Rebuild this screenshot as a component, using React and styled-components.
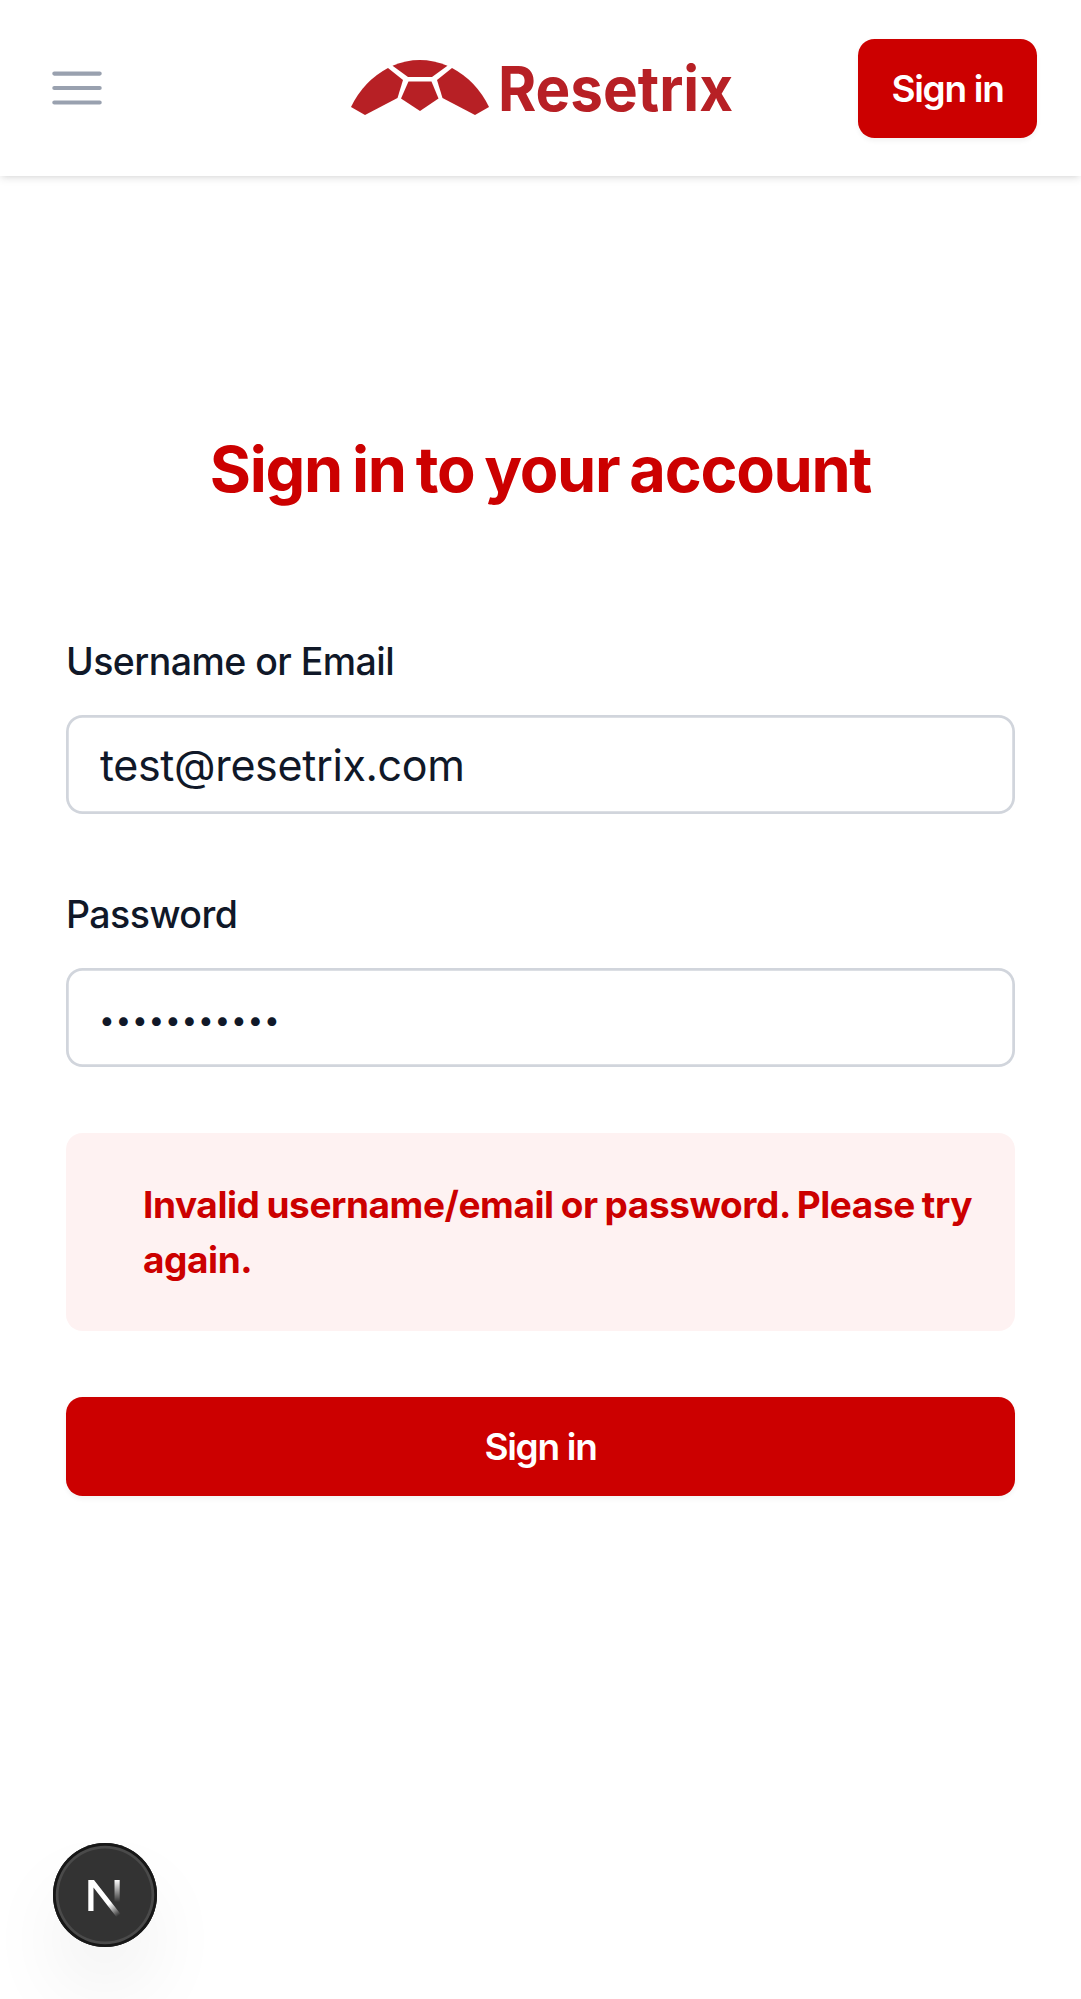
import React from "react";
import styled, { createGlobalStyle, css } from "styled-components";

const GlobalStyle = createGlobalStyle`
  *, *::before, *::after { box-sizing: border-box; }
  body {
    margin: 0;
    background: #fff;
    color: #101828;
    font-family: Inter, "Liberation Sans", sans-serif;
  }
`;

const Page = styled.div`
  display: flex;
  flex-direction: column;
  height: 1999px;
  overflow: hidden;
`;

const Header = styled.header`
  display: grid;
  grid-template-columns: 1fr auto 1fr;
  align-items: center;
  height: 176px;
  padding: 0 44px;
  background: #fff;
  box-shadow: 0 2.75px 8.25px rgba(0, 0, 0, 0.1), 0 2.75px 5.5px -2.75px rgba(0, 0, 0, 0.1);
`;

const MenuButton = styled.button`
  display: flex;
  width: 66px;
  padding: 0;
  border: 0;
  background: none;
  color: #99a1af;
`;

const Logo = styled.svg`
  display: block;
  width: 400px;
  height: 100px;
  overflow: visible;
`;

const buttonBase = css`
  display: flex;
  align-items: center;
  justify-content: center;
  height: 99px;
  border: 0;
  border-radius: 16.5px;
  background: #cc0000;
  color: #fff;
  font-family: inherit;
  font-size: 37px;
  font-weight: 600;
  letter-spacing: -1.3px;
  line-height: 55px;
  padding: 0;
  box-shadow: 0 2.75px 5.5px rgba(0, 0, 0, 0.05);
`;

const HeaderAction = styled.button`
  ${buttonBase}
  justify-self: end;
  width: 179px;
`;

const Main = styled.main`
  flex: 1;
  padding: 249px 66px 0;
`;

const Title = styled.h1`
  margin: 0;
  height: 88px;
  color: #cc0000;
  text-align: center;
  font-size: 63px;
  font-weight: 700;
  line-height: 88px;
  letter-spacing: -1.3px;
  word-spacing: -3.6px;
  white-space: nowrap;
`;

const Form = styled.form`
  display: flex;
  flex-direction: column;
  gap: 66px;
  margin-top: 114px;
`;

const Field = styled.label`
  display: flex;
  flex-direction: column;
  gap: 22px;
`;

const Label = styled.span`
  height: 66px;
  font-size: 37.5px;
  font-weight: 500;
  line-height: 69px;
  letter-spacing: -0.55px;
`;

const Input = styled.input`
  height: 99px;
  padding: 0 34px;
  border: 0;
  border-radius: 16.5px;
  outline: 0;
  background: #fff;
  box-shadow: inset 0 0 0 2.75px #d1d5dc;
  color: #101828;
  font-family: inherit;
  font-size: 43px;
  letter-spacing: -0.35px;

  &[type="password"] {
    padding: 4px 33px 0;
    font-size: 28px;
    letter-spacing: 0.75px;
  }
`;

const Alert = styled.div`
  height: 198px;
  padding: 44px 20px 0 77px;
  border-radius: 16.5px;
  background: #fef2f2;
  color: #cc0000;
  font-size: 37px;
  font-weight: 650;
  line-height: 55px;
  letter-spacing: -0.43px;
  word-spacing: -1.3px;
`;

const SubmitButton = styled.button`
  ${buttonBase}
  width: 100%;
`;

const DevBadge = styled.div`
  position: fixed;
  left: 52.5px;
  bottom: 52.5px;
  width: 104px;
  height: 104px;
  border-radius: 50%;
  background: #333;
  box-shadow: 0 0 0 2.75px #171717 inset, 0 0 0 5.5px #4a4a4a inset,
    0 44px 88px -16px rgba(0, 0, 0, 0.12);
`;

const MenuIcon = () => (
  <svg width="66" height="66" viewBox="0 0 24 24" fill="none" stroke="currentColor" strokeWidth="1.5" strokeLinecap="round">
    <path d="M3.75 6.75h16.5M3.75 12h16.5M3.75 17.25h16.5" />
  </svg>
);

const BrandLogo = () => (
  <Logo viewBox="340.5 38 400 100" role="img" aria-label="Resetrix">
    <g fill="#b72025">
      <path d="M392 65.7Q419 54.5 447 65.7L431.5 77H407.5Z" />
      <path d="M387.5 68L402.5 80L397 98L364.5 115L350.5 107Q363 81 387.5 68Z" />
      <path d="M451.5 68L436.5 80L442 98L474.5 115L488.5 107Q476 81 451.5 68Z" />
      <path d="M408 81.5H431L438 98.5L419.5 111L400.5 98.5Z" />
      <text x="497.5" y="111" fontSize="62" fontWeight="650" textLength="235" lengthAdjust="spacingAndGlyphs">Resetrix</text>
    </g>
  </Logo>
);

const NextMark = () => (
  <svg width="104" height="104" viewBox="0 0 104 104" fill="none">
    <defs>
      <linearGradient id="diag" x1="60" y1="58" x2="69" y2="70" gradientUnits="userSpaceOnUse">
        <stop stopColor="#fff" />
        <stop offset="1" stopColor="#fff" stopOpacity="0" />
      </linearGradient>
      <linearGradient id="stem" x1="64" y1="37" x2="64" y2="59" gradientUnits="userSpaceOnUse">
        <stop stopColor="#fff" />
        <stop offset="1" stopColor="#fff" stopOpacity="0" />
      </linearGradient>
    </defs>
    <path d="M35.3 37H41L69.5 73.5L65 76L40.5 44.5V68H35.3Z" fill="url(#diag)" />
    <path d="M61.5 37H66.7V59H61.5Z" fill="url(#stem)" />
  </svg>
);

export default function App() {
  return (
    <Page>
      <GlobalStyle />
      <Header>
        <MenuButton aria-label="Open menu"><MenuIcon /></MenuButton>
        <BrandLogo />
        <HeaderAction>Sign in</HeaderAction>
      </Header>
      <Main>
        <Title>Sign in to your account</Title>
        <Form>
          <Field>
            <Label>Username or Email</Label>
            <Input type="text" defaultValue="test@resetrix.com" />
          </Field>
          <Field>
            <Label>Password</Label>
            <Input type="password" defaultValue="resetrix123" />
          </Field>
          <Alert role="alert">Invalid username/email or password. Please try again.</Alert>
          <SubmitButton type="button">Sign in</SubmitButton>
        </Form>
      </Main>
      <DevBadge><NextMark /></DevBadge>
    </Page>
  );
}
